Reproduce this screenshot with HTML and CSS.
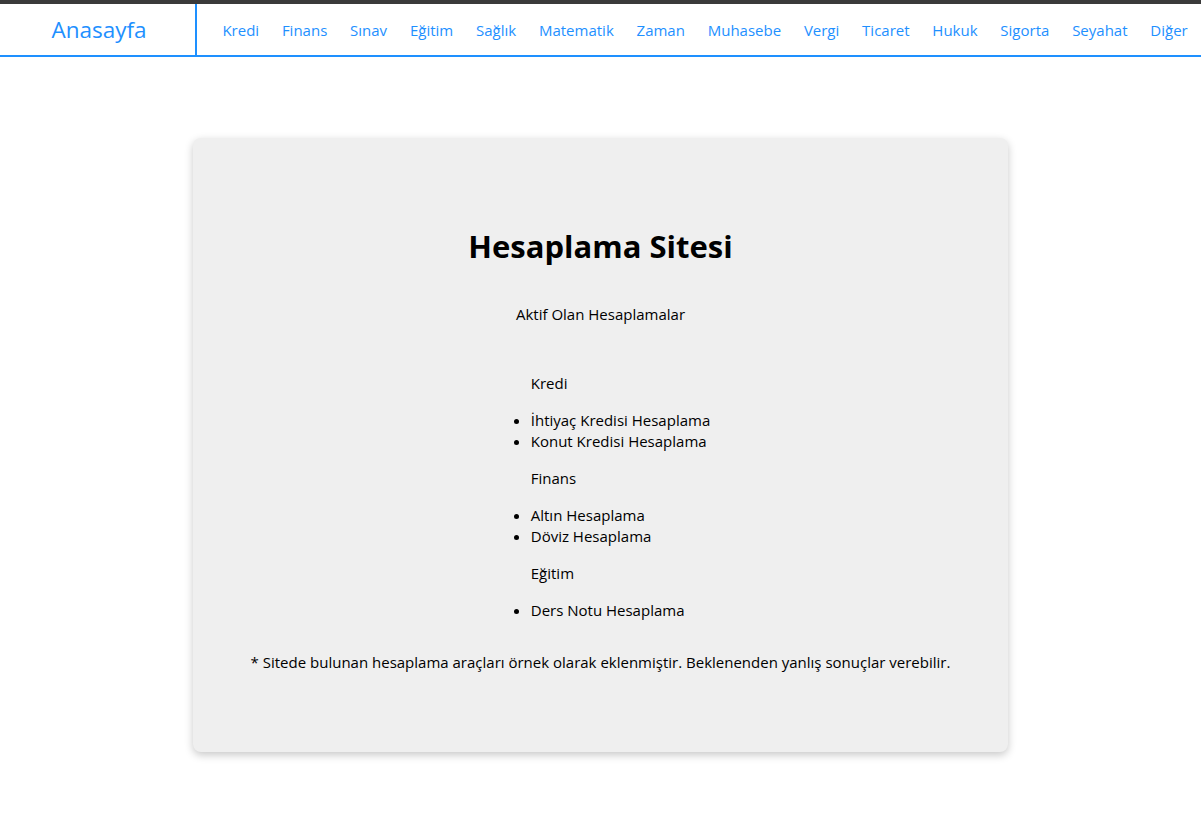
FILE: index.html
```html
<!DOCTYPE html>
<html lang="tr">
<head>
<meta charset="utf-8">
<title>Hesaplama Sitesi</title>
<link rel="stylesheet" href="styles.css">
</head>
<body>
<header class="topnav">
  <a class="brand" href="#">Anasayfa</a>
  <nav class="links">
    <a href="#">Kredi</a>
    <a href="#">Finans</a>
    <a href="#">Sınav</a>
    <a href="#">Eğitim</a>
    <a href="#">Sağlık</a>
    <a href="#">Matematik</a>
    <a href="#">Zaman</a>
    <a href="#">Muhasebe</a>
    <a href="#">Vergi</a>
    <a href="#">Ticaret</a>
    <a href="#">Hukuk</a>
    <a href="#">Sigorta</a>
    <a href="#">Seyahat</a>
    <a href="#">Diğer</a>
  </nav>
</header>
<main class="main">
  <section class="card">
    <h1 class="title">Hesaplama Sitesi</h1>
    <p class="subtitle">Aktif Olan Hesaplamalar</p>
    <div class="list-wrap">
      <ul class="calc-list">
        <li class="group">Kredi</li>
        <li>İhtiyaç Kredisi Hesaplama</li>
        <li>Konut Kredisi Hesaplama</li>
        <li class="group">Finans</li>
        <li>Altın Hesaplama</li>
        <li>Döviz Hesaplama</li>
        <li class="group">Eğitim</li>
        <li>Ders Notu Hesaplama</li>
      </ul>
    </div>
    <p class="note">* Sitede bulunan hesaplama araçları örnek olarak eklenmiştir. Beklenenden yanlış sonuçlar verebilir.</p>
  </section>
</main>
</body>
</html>
```

FILE: styles.css
```css
* { box-sizing: border-box; }

body {
  margin: 0;
  background: #ffffff;
  font-family: "Open Sans", "Noto Sans", sans-serif;
  font-size: 16px;
  color: #000;
}

.topnav {
  display: flex;
  align-items: stretch;
  height: 57px;
  border-top: 4px solid #3a3a3a;
  border-bottom: 2px solid #1e90ff;
  background: #fff;
}

.brand {
  width: 197px;
  flex: none;
  display: flex;
  align-items: center;
  justify-content: center;
  border-right: 2px solid #1e90ff;
  color: #1e90ff;
  text-decoration: none;
  font-size: 22.5px;
  padding-left: 3px;
  padding-bottom: 1px;
}

.links {
  display: flex;
  align-items: center;
  padding-left: 14px;
  white-space: nowrap;
}

.links a {
  color: #1e90ff;
  text-decoration: none;
  padding: 0 11.4px;
  font-size: 15px;
}

.main {
  padding: 81px 0 60px;
}

.card {
  width: 815px;
  margin: 0 auto;
  background: #efefef;
  border-radius: 8px;
  box-shadow: 0 3px 8px rgba(0, 0, 0, 0.22);
  padding: 87px 20px 79px;
  text-align: center;
}

.title {
  margin: 0;
  font-size: 31px;
  line-height: 43px;
  font-weight: 700;
}

.subtitle {
  margin: 36px 0 0;
  line-height: 21px;
  font-size: 15px;
}

.list-wrap {
  margin-top: 48px;
}

.calc-list {
  display: inline-block;
  text-align: left;
  margin: 0;
  padding-left: 40px;
  line-height: 21px;
  font-size: 15px;
}

.calc-list .group {
  list-style: none;
  margin: 16px 0;
}

.calc-list .group:first-child {
  margin-top: 0;
}

.note {
  margin: 31px 0 0;
  line-height: 21px;
  font-size: 15px;
}
```
